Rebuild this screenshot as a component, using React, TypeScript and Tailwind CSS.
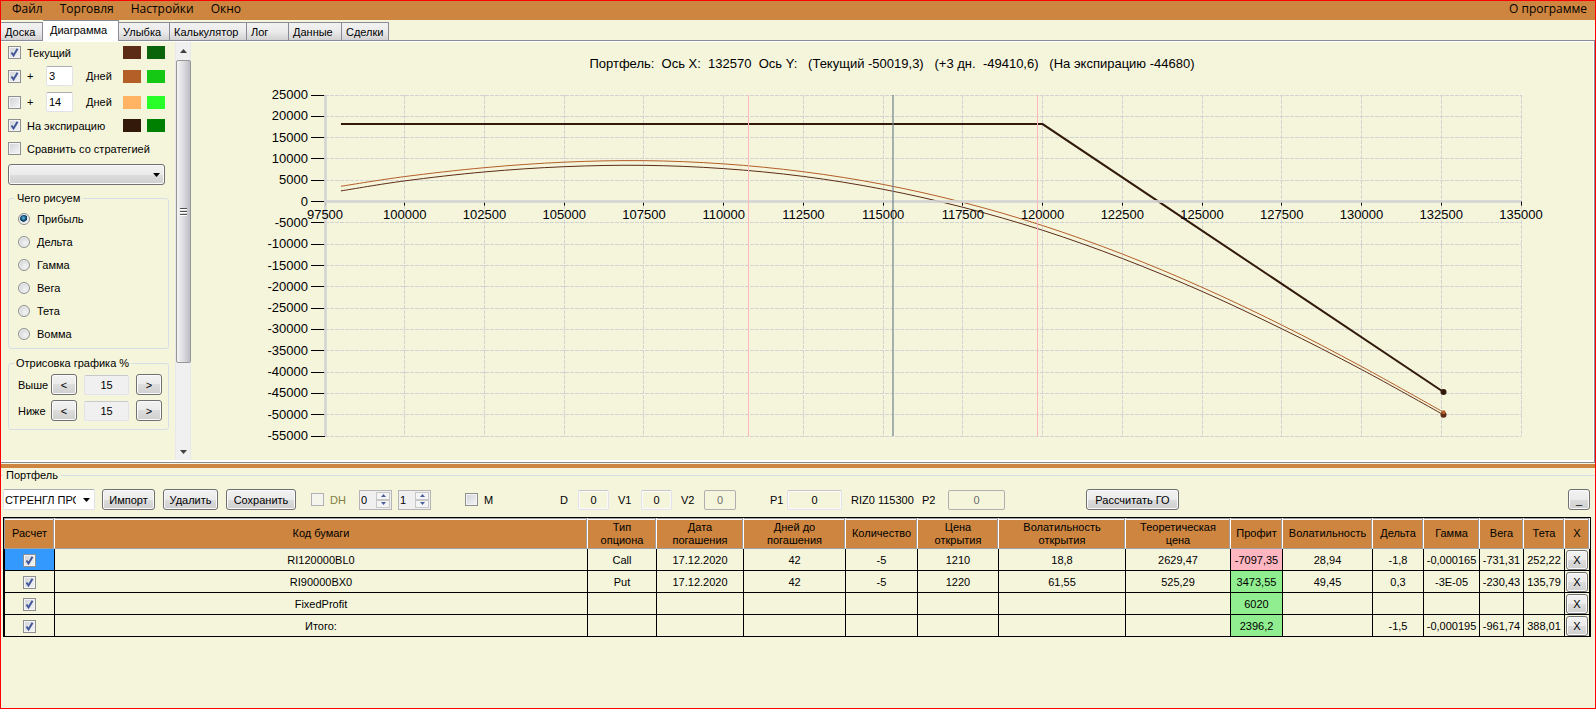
import clsx from "clsx"
import type { ReactNode } from "react"

const MENU = ["Файл", "Торговля", "Настройки", "Окно"]

const TABS = [
    { label: "Доска", width: "w-[42px]" },
    { label: "Диаграмма", width: "w-[76px]", active: true },
    { label: "Улыбка", width: "w-[51px]" },
    { label: "Калькулятор", width: "w-[77px]" },
    { label: "Лог", width: "w-[42px]" },
    { label: "Данные", width: "w-[53px]" },
    { label: "Сделки", width: "w-[47px]" },
]

const GREEKS = ["Прибыль", "Дельта", "Гамма", "Вега", "Тета", "Вомма"]

const COLUMNS = [
    { title: "Расчет", width: "w-[51px]" },
    { title: "Код бумаги", width: "" },
    { title: "Тип\nопциона", width: "w-[69px]" },
    { title: "Дата\nпогашения", width: "w-[87px]" },
    { title: "Дней до\nпогашения", width: "w-[102px]" },
    { title: "Количество", width: "w-[72px]" },
    { title: "Цена\nоткрытия", width: "w-[81px]" },
    { title: "Волатильность\nоткрытия", width: "w-[127px]" },
    { title: "Теоретическая\nцена", width: "w-[105px]" },
    { title: "Профит", width: "w-[52px]" },
    { title: "Волатильность", width: "w-[90px]" },
    { title: "Дельта", width: "w-[51px]" },
    { title: "Гамма", width: "w-[56px]" },
    { title: "Вега", width: "w-[44px]" },
    { title: "Тета", width: "w-[41px]" },
    { title: "X", width: "w-[25px]" },
]

const ROWS = [
    ["RI120000BL0", "Call", "17.12.2020", "42", "-5", "1210", "18,8", "2629,47", "-7097,35", "28,94", "-1,8", "-0,000165", "-731,31", "252,22"],
    ["RI90000BX0", "Put", "17.12.2020", "42", "-5", "1220", "61,55", "525,29", "3473,55", "49,45", "0,3", "-3E-05", "-230,43", "135,79"],
    ["FixedProfit", "", "", "", "", "", "", "", "6020", "", "", "", "", ""],
    ["Итого:", "", "", "", "", "", "", "", "2396,2", "", "-1,5", "-0,000195", "-961,74", "388,01"],
]

const PROFIT_COLUMN = 8

type Point = [number, number]

const CURRENT: Point[] = [
    [98000, 2500], [100000, 4850], [102500, 6950], [105000, 8180], [107500, 8500],
    [110000, 7730], [112500, 5900], [115000, 2880], [117500, -1340], [120000, -6730],
    [122500, -13360], [125000, -21080], [127500, -29850], [130000, -39400], [132570, -50019],
]

const PLUS_THREE: Point[] = [
    [98000, 3590], [100000, 5860], [102500, 7950], [105000, 9240], [107500, 9600],
    [110000, 8840], [112500, 7000], [115000, 4020], [117500, -190], [120000, -5630],
    [122500, -12310], [125000, -20120], [127500, -28970], [130000, -38700], [132570, -49410],
]

const EXPIRATION: Point[] = [[98000, 18170], [120000, 18170], [132570, -44680]]

// plot area inside the chart's view box
const LEFT = 134
const RIGHT = 1330
const TOP = 10
const BOTTOM = 351

const toX = (price: number) => LEFT + ((price - 97500) / 37500) * (RIGHT - LEFT)
const toY = (profit: number) => TOP + ((25000 - profit) / 80000) * (BOTTOM - TOP)

// crisp position for one pixel lines
const snap = (value: number) => Math.floor(value) + 0.5

const PRICES = Array.from({ length: 16 }, (_, i) => 97500 + i * 2500)
const PROFITS = Array.from({ length: 17 }, (_, i) => 25000 - i * 5000)

function smoothPath(points: Point[]) {
    const p = points.map(([x, y]) => [toX(x), toY(y)])
    let d = `M${p[0][0]} ${p[0][1]}`
    for (let i = 0; i < p.length - 1; i++) {
        const a = p[i - 1] ?? p[i]
        const b = p[i]
        const c = p[i + 1]
        const e = p[i + 2] ?? c
        d += ` C${b[0] + (c[0] - a[0]) / 6} ${b[1] + (c[1] - a[1]) / 6} ${c[0] - (e[0] - b[0]) / 6} ${c[1] - (e[1] - b[1]) / 6} ${c[0]} ${c[1]}`
    }
    return d
}

function CheckBox({ checked = false, disabled = false, label }: { checked?: boolean; disabled?: boolean; label?: string }) {
    return (
        <span className="inline-grid size-[13px] shrink-0 align-middle">
            <input
                type="checkbox"
                defaultChecked={checked}
                disabled={disabled}
                aria-label={label}
                className="peer col-start-1 row-start-1 size-[13px] appearance-none border border-[#8e8f8f] bg-linear-to-br from-[#cfd3d8] to-[#f6f6f6] shadow-[inset_0_0_0_1px_#f4f4f4] disabled:border-[#b1b1b1] disabled:from-[#f4f4ea] disabled:to-[#f4f4ea]"
            />
            <svg viewBox="0 0 13 13" className="pointer-events-none col-start-1 row-start-1 size-[13px] opacity-0 peer-checked:opacity-100">
                <path d="M3.5 6.5 L5.5 9.5 L9.5 2.8" fill="none" stroke="#42569a" strokeWidth="2" />
            </svg>
        </span>
    )
}

function Check({ label, checked, disabled, className }: {
    label: string
    checked?: boolean
    disabled?: boolean
    className?: string
}) {
    return (
        <label className={clsx("inline-flex items-center gap-[6px]", className)}>
            <CheckBox checked={checked} disabled={disabled} />
            {label}
        </label>
    )
}

function Button({ children, className, label }: { children: ReactNode; className?: string; label?: string }) {
    return (
        <button
            type="button"
            aria-label={label}
            className={clsx(
                "shrink-0 rounded-[3px] border border-[#707070] bg-[linear-gradient(#f2f2f2,#ebebeb_50%,#dddddd_50%,#cfcfcf)] text-center leading-[18px] whitespace-nowrap shadow-[inset_0_0_0_1px_#fafafa]",
                className,
            )}
        >
            {children}
        </button>
    )
}

function Swatch({ color }: { color: string }) {
    return <span className={clsx("h-[13px] w-[18px]", color)} />
}

function DaysRow({ days, checked, left, right }: { days: string; checked: boolean; left: string; right: string }) {
    return (
        <div className="flex h-[26px] items-center">
            <Check label="+" checked={checked} className="w-[38px]" />
            <input
                defaultValue={days}
                aria-label="Количество дней"
                className="h-5 w-[27px] rounded-[2px] border border-[#e2e3ea] border-t-[#abadb3] bg-white pl-[2px]"
            />
            <span className="ml-[13px] flex-1">Дней</span>
            <span className="flex gap-[6px]">
                <Swatch color={left} />
                <Swatch color={right} />
            </span>
        </div>
    )
}

function RangeRow({ label }: { label: string }) {
    return (
        <div className="flex h-[21px] items-center">
            <span className="w-[33px]">{label}</span>
            <Button className="h-[21px] w-[26px]" label={`${label} меньше`}>&lt;</Button>
            <input
                readOnly
                value="15"
                aria-label={label}
                className="mx-[7px] h-5 w-[45px] rounded-[2px] border border-[#e2e3ea] border-t-[#c8c9cd] bg-[#f0f0f0] text-center"
            />
            <Button className="h-[21px] w-[26px]" label={`${label} больше`}>&gt;</Button>
        </div>
    )
}

function Arrow() {
    return (
        <svg viewBox="0 0 7 4" className="pointer-events-none col-start-1 row-start-1 mr-[5px] h-1 w-[7px] justify-self-end">
            <path d="M0 0 H7 L3.5 4 Z" fill="#000" />
        </svg>
    )
}

function Sidebar() {
    return (
        <div className="w-[174px] shrink-0 pr-[6px] pl-[7px]">
            <div className="pr-1">
                <div className="flex h-[21px] items-center justify-between">
                    <Check label="Текущий" checked />
                    <span className="flex gap-[6px]">
                        <Swatch color="bg-[#5c2c16]" />
                        <Swatch color="bg-[#0a640a]" />
                    </span>
                </div>
                <DaysRow days="3" checked left="bg-[#b45e28]" right="bg-[#14c814]" />
                <DaysRow days="14" checked={false} left="bg-[#ffb464]" right="bg-[#28ff28]" />
                <div className="flex h-[21px] items-center justify-between">
                    <Check label="На экспирацию" checked />
                    <span className="flex gap-[6px]">
                        <Swatch color="bg-[#32190a]" />
                        <Swatch color="bg-[#008000]" />
                    </span>
                </div>
                <Check label="Сравнить со стратегией" className="h-[25px] whitespace-nowrap" />
                <div className="mt-[3px] grid items-center">
                    <select
                        aria-label="Стратегия"
                        className="col-start-1 row-start-1 h-[21px] appearance-none rounded-[3px] border border-[#707070] bg-[linear-gradient(#f2f2f2,#ebebeb_50%,#dddddd_50%,#cfcfcf)] shadow-[inset_0_0_0_1px_#fafafa]"
                    />
                    <Arrow />
                </div>
            </div>

            <fieldset className="mt-[6px] rounded-[3px] border border-[#d5dfe5] px-[5px] pt-[2px] pb-[3px]">
                <legend className="px-[3px] leading-[14px]">Чего рисуем</legend>
                {GREEKS.map((name, i) => (
                    <label key={name} className="flex h-[23px] items-center gap-[7px] pl-1">
                        <input
                            type="radio"
                            name="greek"
                            defaultChecked={i === 0}
                            className="size-3 appearance-none rounded-full border border-[#8e8f8f] bg-[radial-gradient(circle_at_60%_60%,#f4f4f4,#c4c8cc)] shadow-[inset_0_0_0_1px_#f4f4f4] checked:bg-[radial-gradient(circle_at_45%_40%,#6cc4ee_0,#12537c_30%,#0c3450_42%,#f0f0f0_50%)]"
                        />
                        {name}
                    </label>
                ))}
            </fieldset>

            <fieldset className="mt-[7px] rounded-[3px] border border-[#d5dfe5] pt-1 pr-[5px] pb-2 pl-[5px]">
                <legend className="px-[2px] leading-[14px]">Отрисовка графика %</legend>
                <div className="flex flex-col gap-[5px] pl-1">
                    <RangeRow label="Выше" />
                    <RangeRow label="Ниже" />
                </div>
            </fieldset>
        </div>
    )
}

function ScrollBar() {
    return (
        <div className="flex w-4 shrink-0 flex-col items-center border-x border-[#e8e8ec] bg-[#f0f0f0]">
            <svg viewBox="0 0 14 18" className="h-[18px] w-[14px]">
                <path d="M4 11 L7.5 7 L11 11 Z" fill="#404040" />
            </svg>
            <div className="flex h-[303px] w-[15px] flex-col items-center justify-center gap-[2px] rounded-[2px] border border-[#979797] bg-linear-to-r from-[#f4f4f4] via-[#dcdce0] to-[#bcbcc4]">
                <span className="h-px w-[7px] bg-[#505050] shadow-[0_1px_0_#fff]" />
                <span className="h-px w-[7px] bg-[#505050] shadow-[0_1px_0_#fff]" />
                <span className="h-px w-[7px] bg-[#505050] shadow-[0_1px_0_#fff]" />
            </div>
            <svg viewBox="0 0 14 18" className="mt-auto h-[18px] w-[14px]">
                <path d="M4 8 H11 L7.5 12 Z" fill="#404040" />
            </svg>
        </div>
    )
}

function Chart() {
    return (
        <div className="min-w-0 flex-1">
            <p className="flex h-[43px] items-center justify-center text-[13px] whitespace-pre">
                {"Портфель:  Ось X:  132570  Ось Y:   (Текущий -50019,3)   (+3 дн.  -49410,6)   (На экспирацию -44680)"}
            </p>
            <svg viewBox="0 0 1402 375" className="block w-full text-[13px]">
                <g stroke="#d3d3d3" strokeDasharray="4 1">
                    {PROFITS.map((v) => (
                        <line key={v} x1={LEFT} x2={RIGHT} y1={snap(toY(v))} y2={snap(toY(v))} />
                    ))}
                    {PRICES.map((v) => (
                        <line key={v} x1={snap(toX(v))} x2={snap(toX(v))} y1={TOP} y2={BOTTOM} />
                    ))}
                </g>
                <g stroke="#000">
                    {PROFITS.map((v) => (
                        <line key={v} x1={LEFT - 14} x2={LEFT} y1={snap(toY(v))} y2={snap(toY(v))} />
                    ))}
                    {PRICES.map((v) => (
                        <line key={v} x1={snap(toX(v))} x2={snap(toX(v))} y1={toY(0)} y2={toY(0) + 4} />
                    ))}
                </g>
                <g fill="none">
                    <path d={smoothPath(CURRENT)} stroke="#5c2c16" />
                    <path d={smoothPath(PLUS_THREE)} stroke="#b45e28" />
                    <polyline
                        points={EXPIRATION.map(([x, y]) => `${toX(x)},${toY(y)}`).join(" ")}
                        stroke="#32190a"
                        strokeWidth="2"
                    />
                </g>
                <circle cx={toX(132570)} cy={toY(-50019)} r="3" fill="#5c2c16" />
                <circle cx={toX(132570)} cy={toY(-49410)} r="2" fill="#b45e28" />
                <circle cx={toX(132570)} cy={toY(-44680)} r="3" fill="#32190a" />
                <g stroke="#d3d3d3" strokeWidth="3" strokeOpacity="0.85">
                    <line x1={LEFT + 0.5} x2={LEFT + 0.5} y1={TOP} y2={BOTTOM} />
                    <line x1={LEFT} x2={RIGHT} y1={snap(toY(0))} y2={snap(toY(0))} />
                </g>
                <g shapeRendering="crispEdges">
                    <line x1="557.5" x2="557.5" y1={TOP} y2={BOTTOM} stroke="#ffb6c1" />
                    <line x1="846.5" x2="846.5" y1={TOP} y2={BOTTOM} stroke="#ffb6c1" />
                    <line x1="702" x2="702" y1={TOP} y2={BOTTOM} stroke="#708090" strokeWidth="2" strokeOpacity="0.6" />
                </g>
                {PROFITS.map((v) => (
                    <text key={v} x={LEFT - 17} y={Math.round(toY(v)) + 4} textAnchor="end">{v}</text>
                ))}
                {PRICES.map((v) => (
                    <text key={v} x={toX(v)} y={Math.round(toY(0)) + 17} textAnchor="middle">{v}</text>
                ))}
            </svg>
        </div>
    )
}

function Spinner({ value, label }: { value: string; label: string }) {
    return (
        <div className="flex h-5 w-[33px] border border-[#b4b4b4] bg-[#f0f0f0] pr-px">
            <input defaultValue={value} aria-label={label} className="w-4 bg-transparent pl-px" />
            <span className="flex flex-1 flex-col justify-center">
                <button type="button" aria-label={`${label} больше`} className="flex h-2 items-center justify-center border border-[#c8c8c8] bg-[#f4f4f4]">
                    <svg viewBox="0 0 5 3" className="h-[3px] w-[5px]"><path d="M0 3 H5 L2.5 0 Z" fill="#4a5f9c" /></svg>
                </button>
                <button type="button" aria-label={`${label} меньше`} className="flex h-2 items-center justify-center border border-[#c8c8c8] bg-[#f4f4f4]">
                    <svg viewBox="0 0 5 3" className="h-[3px] w-[5px]"><path d="M0 0 H5 L2.5 3 Z" fill="#4a5f9c" /></svg>
                </button>
            </span>
        </div>
    )
}

function Field({ label, width, labelWidth, disabled = false, className }: {
    label: string
    width: string
    labelWidth: string
    disabled?: boolean
    className?: string
}) {
    return (
        <label className={clsx("flex items-center", className)}>
            <span className={labelWidth}>{label}</span>
            <input
                defaultValue="0"
                disabled={disabled}
                className={clsx(
                    "h-5 rounded-[2px] border bg-[#f5f5dc] text-center",
                    disabled ? "border-[#afafaf] text-[#6d6d6d]" : "border-[#e2e3ea] border-t-[#c4c6ca] shadow-[inset_0_0_0_1px_#fafafa]",
                    width,
                )}
            />
        </label>
    )
}

function Toolbar() {
    return (
        <div className="flex h-[35px] items-center pr-[5px] pl-[2px]">
            <div className="grid items-center">
                <select
                    aria-label="Портфель"
                    className="col-start-1 row-start-1 h-[21px] w-[92px] appearance-none rounded-[2px] border border-[#e2e3ea] border-t-[#abadb3] bg-white pr-[18px] pl-px"
                >
                    <option>СТРЕНГЛ ПРОДАЖА</option>
                </select>
                <Arrow />
            </div>
            <Button className="ml-[7px] h-[21px] w-[53px]">Импорт</Button>
            <Button className="ml-2 h-[21px] w-[55px]">Удалить</Button>
            <Button className="ml-2 h-[21px] w-[70px]">Сохранить</Button>
            <Check label="DH" disabled className="ml-[15px] w-12 text-[#808040]" />
            <Spinner value="0" label="DH от" />
            <span className="w-[6px]" />
            <Spinner value="1" label="DH до" />
            <Check label="M" className="ml-[34px] w-[95px]" />
            <Field label="D" labelWidth="w-[18px]" width="w-[31px]" />
            <Field label="V1" labelWidth="w-[23px]" width="w-[31px]" className="ml-[9px]" />
            <Field label="V2" labelWidth="w-[23px]" width="w-8" className="ml-[9px]" disabled />
            <Field label="P1" labelWidth="w-[17px]" width="w-[55px]" className="ml-[34px]" />
            <span className="ml-[9px] w-[71px] whitespace-nowrap">RIZ0 115300</span>
            <Field label="P2" labelWidth="w-[26px]" width="w-[57px]" disabled />
            <Button className="ml-[81px] h-[21px] w-[93px]">Рассчитать ГО</Button>
            <Button className="ml-auto h-[21px] w-[22px]" label="Свернуть">_</Button>
        </div>
    )
}

function PortfolioTable() {
    return (
        <table className="w-full table-fixed border-separate border-spacing-0 text-center">
            <thead>
                <tr className="h-[31px]">
                    {COLUMNS.map((col, i) => (
                        <th
                            key={col.title}
                            className={clsx(
                                "border-r border-b border-r-white border-b-[#a0a0a0] bg-[#cd853f] p-0 pt-px leading-[13px] font-normal whitespace-pre-line shadow-[inset_-1px_0_0_#a0a0a0,inset_0_1px_0_#a0a0a0,inset_0_2px_0_#ffffff]",
                                i === 0 && "border-l border-l-[#a0a0a0]",
                                col.width,
                            )}
                        >
                            {col.title}
                        </th>
                    ))}
                </tr>
            </thead>
            <tbody>
                {ROWS.map((row, i) => (
                    <tr key={row[0]} className="h-[22px]">
                        <td className={clsx("border-x border-b border-black p-0", i === 0 && "bg-[#3399ff]")}>
                            <CheckBox label={row[0]} checked />
                        </td>
                        {row.map((cell, j) => (
                            <td
                                key={j}
                                className={clsx(
                                    "border-r border-b border-black p-0 whitespace-nowrap",
                                    j === PROFIT_COLUMN && (cell.startsWith("-") ? "bg-[#ffb6c1]" : "bg-[#90ee90]"),
                                )}
                            >
                                {cell}
                            </td>
                        ))}
                        <td className="border-r border-b border-black p-0">
                            <Button className="mx-auto block h-5 w-[22px]">X</Button>
                        </td>
                    </tr>
                ))}
            </tbody>
        </table>
    )
}

export default function App() {
    return (
        <div className="flex min-h-screen flex-col border border-[#ff0000] bg-[#f5f5dc] font-['Liberation_Sans',Arial,sans-serif] text-[11px] leading-[14px] text-black">
            <nav className="flex h-[19px] gap-[17px] bg-[#cd853f] pr-2 pl-[11px] font-['Open_Sans','Noto_Sans',sans-serif] text-[12px] leading-[15px]">
                {MENU.map((item) => (
                    <button key={item} type="button" className="h-[15px]">{item}</button>
                ))}
                <button type="button" className="ml-auto h-[15px]">О программе</button>
            </nav>

            <div role="tablist" className="flex h-5 items-end">
                {TABS.map((tab) => (
                    <button
                        key={tab.label}
                        type="button"
                        role="tab"
                        aria-selected={!!tab.active}
                        className={clsx(
                            "border-t border-r border-[#898c95] pl-1 text-left",
                            tab.width,
                            tab.active
                                ? "relative -mb-px h-[21px] bg-white pb-[3px] pl-[7px]"
                                : "h-[18px] bg-linear-to-b from-[#f2f2f2] via-[#ebebeb] to-[#d2d2d2]",
                        )}
                    >
                        {tab.label}
                    </button>
                ))}
            </div>

            <div className="border-t border-r border-b border-[#898c95]">
                <div className="flex border-t border-r border-b-2 border-white">
                    <Sidebar />
                    <ScrollBar />
                    <Chart />
                </div>
            </div>
            <div className="mt-px h-1 bg-[#cd853f]" />

            <fieldset className="flex min-w-0 flex-1 flex-col border-t border-[#d5dfe5]">
                <legend className="ml-[2px] px-[3px]">Портфель</legend>
                <Toolbar />
                <div className="mr-1 ml-[2px] flex-1 border-t border-r border-l border-black">
                    <PortfolioTable />
                </div>
            </fieldset>
        </div>
    )
}
